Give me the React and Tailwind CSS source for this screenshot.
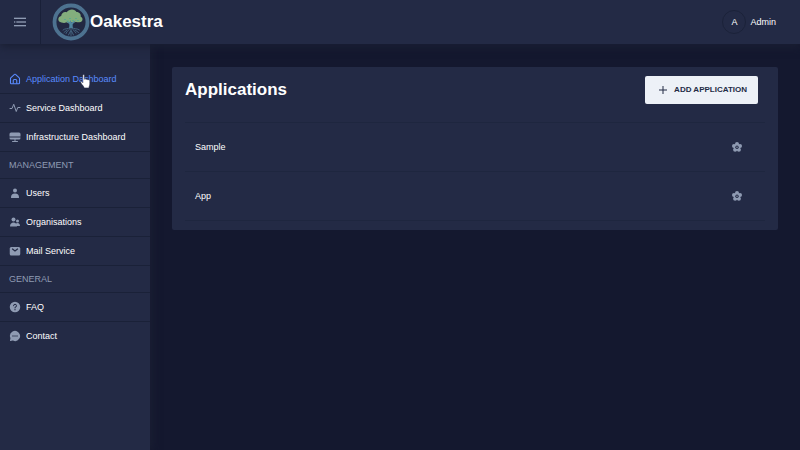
const dark = '#232a45';

function Icon({ children, className = 'size-3' }) {
  return (
    <svg viewBox="0 0 24 24" fill="currentColor" aria-hidden="true" className={`shrink-0 ${className}`}>
      {children}
    </svg>
  );
}

const icons = {
  home: (
    <g fill="none" stroke="currentColor" strokeWidth="2.200" strokeLinejoin="round">
      <path d="M5 21.500h14.500a1.500 1.500 0 0 0 1.500-1.500v-9.200a1.500 1.500 0 0 0-.5-1.100L13 2.900a1.400 1.400 0 0 0-2 0L3.500 9.700a1.500 1.500 0 0 0-.5 1.100V20a1.500 1.500 0 0 0 1.500 1.500z" />
      <path d="M8.500 21.500V15a2 2 0 0 1 2-2h3a2 2 0 0 1 2 2v6.500" />
    </g>
  ),
  activity: (
    <path
      fill="none"
      stroke="currentColor"
      strokeWidth="2"
      strokeLinecap="round"
      strokeLinejoin="round"
      d="M2 13h4l3.500-8.500L14.500 19l3-8H22"
    />
  ),
  monitor: (
    <>
      <path d="M20 3H4a3 3 0 0 0-3 3v5h22V6a3 3 0 0 0-3-3z" />
      <path d="M1 13v1a3 3 0 0 0 3 3h7v3H7a1 1 0 0 0 0 2h10a1 1 0 0 0 0-2h-4v-3h7a3 3 0 0 0 3-3v-1z" />
    </>
  ),
  person: (
    <>
      <path d="M12 11a4 4 0 1 0-4-4 4 4 0 0 0 4 4z" />
      <path d="M19 22a1 1 0 0 0 1-1 8 8 0 0 0-16 0 1 1 0 0 0 1 1z" />
    </>
  ),
  people: (
    <>
      <path d="M9 11a4 4 0 1 0-4-4 4 4 0 0 0 4 4z" />
      <path d="M17 13a3 3 0 1 0-3-3 3 3 0 0 0 3 3z" />
      <path d="M21 20a1 1 0 0 0 1-1 5 5 0 0 0-8.060-3.950A7 7 0 0 0 2 20a1 1 0 0 0 1 1h12a1 1 0 0 0 1-1z" />
    </>
  ),
  email: (
    <>
      <rect x="1.500" y="4" width="21" height="17" rx="3" />
      <path d="M7 8l5 4 5-4" fill="none" stroke={dark} strokeWidth="2.400" strokeLinecap="round" />
    </>
  ),
  question: (
    <>
      <circle cx="12" cy="12" r="10.500" />
      <path d="M9 9.500a3 3 0 1 1 3 3v1.500" fill="none" stroke={dark} strokeWidth="2" strokeLinecap="round" />
      <circle cx="12" cy="17.300" r="1.300" fill={dark} />
    </>
  ),
  message: (
    <>
      <path d="M19.070 4.930a10 10 0 0 0-16.280 11 1.060 1.060 0 0 1 .090.640L2 20.800A1 1 0 0 0 3.200 22l4.280-.86a1.260 1.260 0 0 1 .640.090 10 10 0 0 0 10.950-16.300z" />
      <g fill={dark}>
        <circle cx="8" cy="12" r="1.400" />
        <circle cx="12" cy="12" r="1.400" />
        <circle cx="16" cy="12" r="1.400" />
      </g>
    </>
  ),
};

const menu = [
  { label: 'Application Dashboard', icon: 'home', active: true },
  { label: 'Service Dashboard', icon: 'activity' },
  { label: 'Infrastructure Dashboard', icon: 'monitor' },
  { label: 'MANAGEMENT', group: true },
  { label: 'Users', icon: 'person' },
  { label: 'Organisations', icon: 'people' },
  { label: 'Mail Service', icon: 'email' },
  { label: 'GENERAL', group: true },
  { label: 'FAQ', icon: 'question' },
  { label: 'Contact', icon: 'message' },
];

function Logo() {
  return (
    <svg viewBox="0 0 38 38" className="size-[38px] shrink-0" aria-hidden="true">
      <circle cx="19" cy="19" r="16.500" fill="#222842" stroke="#4d7290" strokeWidth="3.800" />
      <path
        fill="#83ae7d"
        d="M9.500 19.500c-4-.5-4.300-5.500-.3-6.500 0-3 3-4.800 5.600-3.800C17 5.500 23 5.500 24.500 9c3 0 4.800 2.500 4.100 4.500 3 1.500 2.400 5.300-1.100 5.800-2 .2-3-.5-4-.2-1.500 1-3 .8-4.300.2-2 1-3.600 1-5 0-1.300 1-2.900.8-4.700.2z"
      />
      <path fill="#4f86a0" d="M14 17.500l3.500 2 .8-2.500 1 2.500 4.500-2-3.200 4 .2 3.500h-3.600l.2-3.500z" />
      <path
        fill="none"
        stroke="#527c98"
        strokeWidth=".7"
        strokeLinecap="round"
        d="M18 24.500c-2 2-5 .5-7 2.500M18 25c-1 3-3 2.500-4 5.500M19 25v7.500M20 25c1 3 3 2.500 4 5M20 24.500c2 2 5 .5 7.500 2.500M15 27l-3 2.500M23 27l3.500 2.500M18.500 28l-2 4M19.500 28l2 4"
      />
      <g fill="#2fa7a6">
        <circle cx="13" cy="16.500" r=".6" />
        <circle cx="16" cy="18" r=".6" />
        <circle cx="18" cy="15.500" r=".6" />
        <circle cx="21" cy="17.500" r=".6" />
        <circle cx="24" cy="15.500" r=".6" />
        <circle cx="26" cy="17.500" r=".6" />
      </g>
    </svg>
  );
}

function Header() {
  return (
    <header className="relative z-10 flex h-11 items-stretch justify-between bg-[#232a45] pr-6 shadow-[0_3px_8px_#1a1f33]">
      <div className="flex items-center">
        <button type="button" aria-label="Toggle menu" className="flex h-full w-[41px] items-center justify-center border-r border-[#192038] text-[#8f9bb3]">
          <Icon className="size-4">
            <rect x="3" y="5.500" width="18" height="2" />
            <rect x="3" y="11" width="2" height="2" />
            <rect x="6.500" y="11" width="14.500" height="2" />
            <rect x="3" y="16.500" width="18" height="2" />
          </Icon>
        </button>
        <a href="#home" className="ml-[11px] flex items-center text-[17px] leading-6 font-bold">
          <Logo />
          Oakestra
        </a>
      </div>
      <button type="button" className="flex items-center gap-1">
        <span className="flex size-6 items-center justify-center rounded-full border border-[#1b2239]">A</span>
        Admin
      </button>
    </header>
  );
}

function Pointer() {
  return (
    <svg viewBox="0 0 10 14" className="absolute top-[9px] left-20 h-[15px] w-[11px]" aria-hidden="true">
      <path
        fill="#fff"
        stroke="#232a45"
        strokeWidth=".5"
        d="M2.500 1.200C2.500.3 4 .3 4 1.200V5c.3-.7 1.500-.6 1.600.2.400-.6 1.500-.4 1.600.4.500-.6 1.800-.3 1.800.7v3c0 1.500-.8 2-.8 3.700H3.800C3.500 11.500 2 10.500.8 8.500.2 7.500 1 6.700 1.800 7.300l.7.800z"
      />
    </svg>
  );
}

function Sidebar() {
  return (
    <nav className="relative w-[150px] shrink-0 bg-[#232a45] pt-[21px] shadow-[2px_0_8px_#1a1f33]">
      <ul>
        {menu.map((item) =>
          item.group ? (
            <li key={item.label} className="flex h-[27px] items-center border-b border-[#1a2138] px-[9px] text-[#8f9bb3]">
              {item.label}
            </li>
          ) : (
            <li key={item.label} className="relative border-b border-[#1a2138] last:border-transparent">
              <a
                href="#menu"
                className={`flex h-7 items-center gap-[5px] px-[9px] ${item.active ? 'text-[#598bff]' : ''}`}
              >
                <Icon className={item.active ? 'size-3' : 'size-3 text-[#8f9bb3]'}>{icons[item.icon]}</Icon>
                {item.label}
              </a>
              {item.active && <Pointer />}
            </li>
          ),
        )}
      </ul>
    </nav>
  );
}

function Gear() {
  return (
    <Icon>
      <circle cx="12" cy="6" r="4" />
      <circle cx="18" cy="10.200" r="4" />
      <circle cx="15.800" cy="17.500" r="4" />
      <circle cx="8.200" cy="17.500" r="4" />
      <circle cx="6" cy="10.200" r="4" />
      <circle cx="12" cy="12.500" r="4.500" fill="none" stroke="currentColor" strokeWidth="4" />
      <circle cx="12" cy="12.500" r="3.300" fill={dark} />
      <circle cx="12" cy="12.500" r="1.500" />
    </Icon>
  );
}

function Applications() {
  return (
    <section className="rounded-xs bg-[#232a45] px-[13px] py-[9px]">
      <div className="flex items-center justify-between pr-[7px]">
        <h1 className="text-[17px] leading-6 font-bold">Applications</h1>
        <button
          type="button"
          className="flex h-7 items-center gap-[5px] rounded-xs bg-[#edf1f7] pr-[11px] pl-3 text-[8px] font-bold text-[#222b45]"
        >
          <Icon>
            <path d="M11 4h2v7h7v2h-7v7h-2v-7H4v-2h7z" />
          </Icon>
          ADD APPLICATION
        </button>
      </div>
      <ul className="mt-[18px] border-t border-[#1e263f]">
        {['Sample', 'App'].map((name) => (
          <li key={name} className="flex h-[49px] items-center justify-between border-b border-[#1e263f] pr-[22px] pl-[10px]">
            {name}
            <button type="button" aria-label={`Settings for ${name}`} className="text-[#8f9bb3]">
              <Gear />
            </button>
          </li>
        ))}
      </ul>
    </section>
  );
}

export default function App() {
  return (
    <div className="flex min-h-screen flex-col bg-[#14182f] font-['Liberation_Sans',Arial,sans-serif] text-[9px] leading-3 text-white">
      <Header />
      <div className="flex flex-1">
        <Sidebar />
        <main className="min-w-0 flex-1 px-[22px] pt-[23px]">
          <Applications />
        </main>
      </div>
    </div>
  );
}
